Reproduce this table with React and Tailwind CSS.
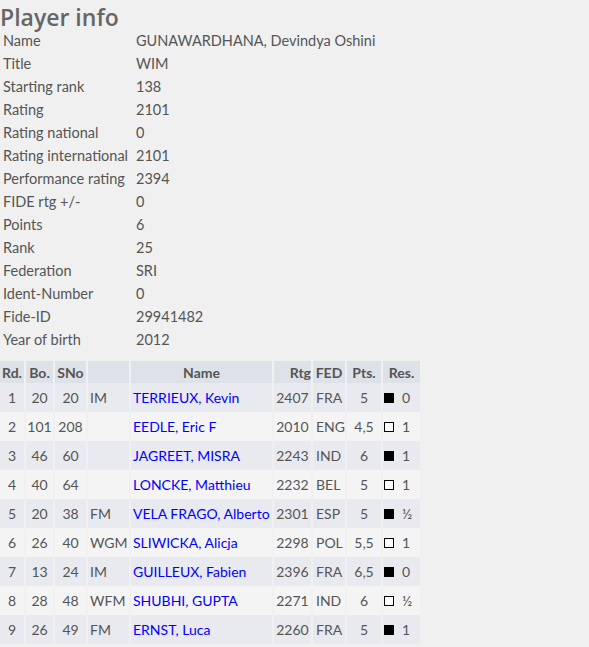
import React from 'react';

const info = [
  ['Name', 'GUNAWARDHANA, Devindya Oshini'],
  ['Title', 'WIM'],
  ['Starting rank', '138'],
  ['Rating', '2101'],
  ['Rating national', '0'],
  ['Rating international', '2101'],
  ['Performance rating', '2394'],
  ['FIDE rtg +/-', '0'],
  ['Points', '6'],
  ['Rank', '25'],
  ['Federation', 'SRI'],
  ['Ident-Number', '0'],
  ['Fide-ID', '29941482'],
  ['Year of birth', '2012'],
];

const games = [
  [1, 20, 20, 'IM', 'TERRIEUX, Kevin', 2407, 'FRA', '5', 'b', '0'],
  [2, 101, 208, '', 'EEDLE, Eric F', 2010, 'ENG', '4,5', 'w', '1'],
  [3, 46, 60, '', 'JAGREET, MISRA', 2243, 'IND', '6', 'b', '1'],
  [4, 40, 64, '', 'LONCKE, Matthieu', 2232, 'BEL', '5', 'w', '1'],
  [5, 20, 38, 'FM', 'VELA FRAGO, Alberto', 2301, 'ESP', '5', 'b', '½'],
  [6, 26, 40, 'WGM', 'SLIWICKA, Alicja', 2298, 'POL', '5,5', 'w', '1'],
  [7, 13, 24, 'IM', 'GUILLEUX, Fabien', 2396, 'FRA', '6,5', 'b', '0'],
  [8, 28, 48, 'WFM', 'SHUBHI, GUPTA', 2271, 'IND', '6', 'w', '½'],
  [9, 26, 49, 'FM', 'ERNST, Luca', 2260, 'FRA', '5', 'b', '1'],
];

export default function App() {
  return (
    <div className="min-h-[647px] bg-[#f0f0f0] text-[#555] text-[14.5px] font-['Lato','Open_Sans',sans-serif]">
      <h2 className="text-[23px] font-semibold text-[#666] leading-[32px] pt-[1px] font-['Open_Sans','Lato',sans-serif]">Player info</h2>

      {/* Player details */}
      <div className="pl-[3px] -mt-[4px]">
        {info.map(([k, v]) => (
          <div key={k} className="flex h-[23px] items-center">
            <div className="w-[133px]">{k}</div>
            <div>{v}</div>
          </div>
        ))}
      </div>

      {/* Rounds */}
      <table className="mt-[10px] text-[14px] table-fixed w-[422px] border-separate border-spacing-x-[2px] border-spacing-y-0 -ml-[2px]">
        <thead>
          <tr className="bg-[#dde1e8] font-bold h-[22px]">
            <th className="w-[24px] text-center">Rd.</th>
            <th className="w-[27px] text-center">Bo.</th>
            <th className="w-[31px] text-center">SNo</th>
            <th className="w-[41px]"></th>
            <th className="w-[141px] text-center">Name</th>
            <th className="w-[37px] text-right">Rtg</th>
            <th className="w-[32px] text-center">FED</th>
            <th className="w-[34px] text-center">Pts.</th>
            <th className="w-[37px] text-center">Res.</th>
          </tr>
        </thead>
        <tbody>
          {games.map((g, i) => (
            <tr key={g[0]} className={`h-[29px] ${i % 2 === 0 ? 'bg-[#e8eaef]' : 'bg-[#f4f4f4]'}`}>
              <td className="text-center">{g[0]}</td>
              <td className="text-center">{g[1]}</td>
              <td className="text-center">{g[2]}</td>
              <td className="pl-[2px]">{g[3]}</td>
              <td className="pl-[2px] text-[#0000ff] whitespace-nowrap">{g[4]}</td>
              <td className="text-center">{g[5]}</td>
              <td className="pl-[3px]">{g[6]}</td>
              <td className="text-center">{g[7]}</td>
              <td className="pl-[1px] whitespace-nowrap">
                <span className={`inline-block w-[10px] h-[10px] mr-[8px] align-[0px] border border-black ${g[8] === 'b' ? 'bg-black' : 'bg-white'}`}></span>
                {g[9]}
              </td>
            </tr>
          ))}
        </tbody>
      </table>
    </div>
  );
}
